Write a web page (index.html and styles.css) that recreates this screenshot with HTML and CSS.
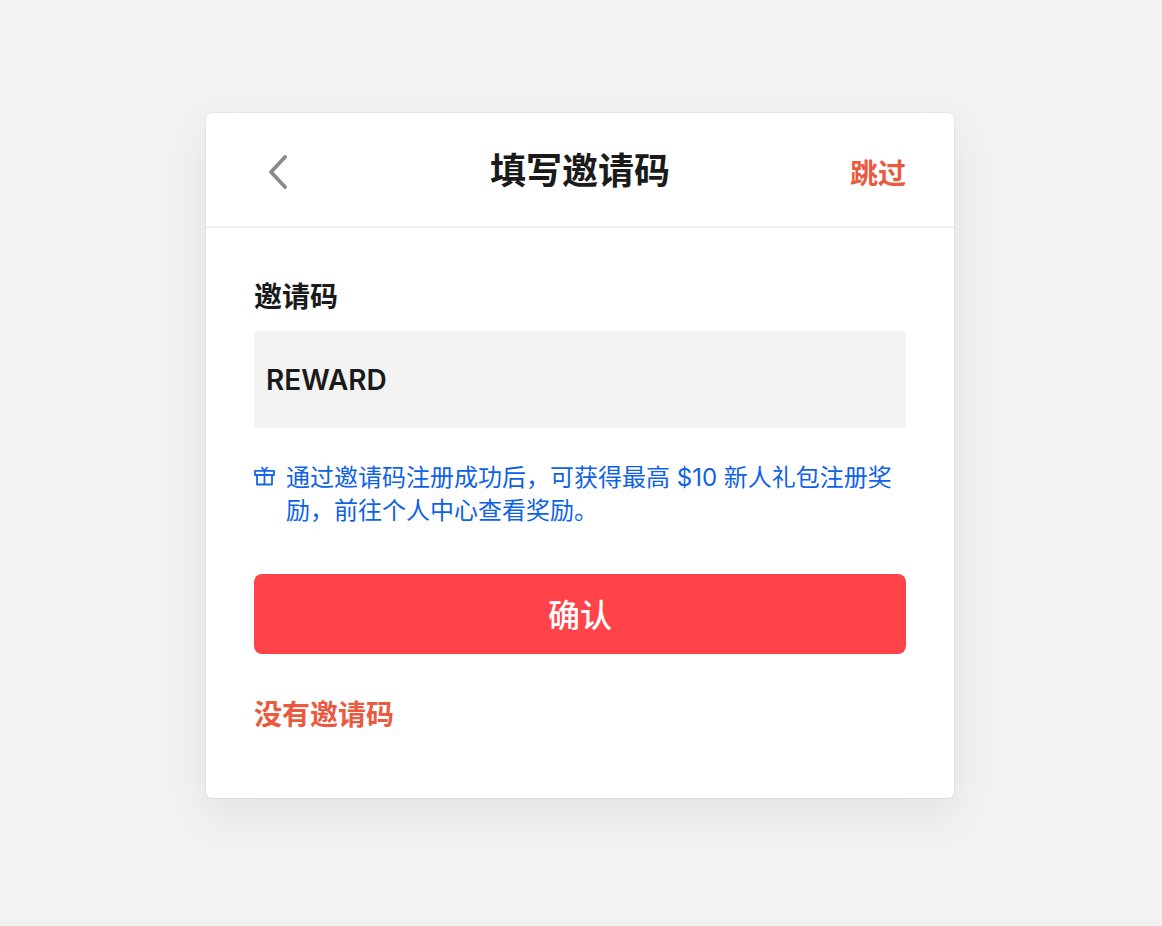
FILE: index.html
```html
<!DOCTYPE html>
<html lang="zh-CN">
<head>
  <meta charset="UTF-8">
  <meta name="viewport" content="width=device-width, initial-scale=1.0">
  <title>填写邀请码</title>
  <link rel="stylesheet" href="styles.css">
</head>
<body>
  <div class="card">
    <div class="header">
      <a class="back" href="#">
        <svg width="20" height="34" viewBox="0 0 20 34" fill="none" stroke="#8a8a8a" stroke-width="3.8" stroke-linecap="round" stroke-linejoin="round">
          <path d="M17 2 L3 17 L17 32"/>
        </svg>
      </a>
      <h1 class="title">填写邀请码</h1>
      <a class="skip" href="#">跳过</a>
    </div>

    <div class="content">
      <label class="label">邀请码</label>
      <div class="code-input">REWARD</div>

      <div class="notice">
        <svg class="gift" width="21" height="20" viewBox="0 0 21 20" fill="none" stroke="#1668e3" stroke-width="1.8" stroke-linejoin="round">
          <path d="M1 4.8 H20 V9 H1 Z"/>
          <path d="M3 9 V18.5 H18 V9"/>
          <path d="M10.5 4.8 V18.5"/>
          <path d="M7.5 1 L10.5 4.8 L13.5 1"/>
        </svg>
        <p>通过邀请码注册成功后，可获得最高 $10 新人礼包注册奖励，前往个人中心查看奖励。</p>
      </div>

      <button class="confirm">确认</button>
      <a class="no-code" href="#">没有邀请码</a>
    </div>
  </div>
</body>
</html>
```

FILE: styles.css
```css
body {
  margin: 0;
  padding: 113px 0 0 206px;
  min-height: 926px;
  box-sizing: border-box;
  background: #f2f2f2;
  font-family: 'Inter', 'Noto Sans CJK SC', sans-serif;
  color: #1a1a1a;
}

a {
  text-decoration: none;
}

.card {
  width: 748px;
  height: 685px;
  background: #fff;
  border-radius: 6px;
  box-shadow: 0 0 2px rgba(0, 0, 0, 0.14), 0 16px 48px rgba(0, 0, 0, 0.07);
}

.header {
  height: 113px;
  padding: 0 48px;
  border-bottom: 2px solid #f1f1f1;
  display: flex;
  align-items: center;
  justify-content: space-between;
  position: relative;
}

.back {
  display: flex;
  margin: 4px 0 0 14px;
}

.title {
  position: absolute;
  left: 0;
  right: 0;
  top: 1px;
  margin: 0;
  font-size: 36px;
  font-weight: 700;
  line-height: 114px;
  text-align: center;
}

.skip {
  margin-top: 4px;
  font-size: 28px;
  font-weight: 700;
  color: #ea5a41;
}

.content {
  padding: 47px 48px 0;
}

.label {
  display: block;
  font-size: 28px;
  font-weight: 700;
  line-height: 44px;
}

.code-input {
  margin-top: 12px;
  height: 97px;
  padding: 0 12px;
  background: #f3f3f3;
  border-radius: 2px;
  font-size: 28px;
  font-weight: 600;
  line-height: 98px;
}

.notice {
  margin-top: 33px;
  display: flex;
  gap: 11px;
  color: #0f62e6;
}

.gift {
  flex: none;
  margin-top: 5px;
}

.notice p {
  margin: 0;
  font-size: 24px;
  line-height: 33px;
}

.confirm {
  display: block;
  width: 100%;
  height: 80px;
  margin-top: 47px;
  padding-bottom: 3px;
  border: none;
  border-radius: 8px;
  background: #ff4348;
  color: #fff;
  font-family: inherit;
  font-size: 32px;
  font-weight: 500;
}

.no-code {
  display: block;
  margin-top: 41px;
  font-size: 28px;
  font-weight: 700;
  line-height: 40px;
  color: #ea5a41;
}
```
